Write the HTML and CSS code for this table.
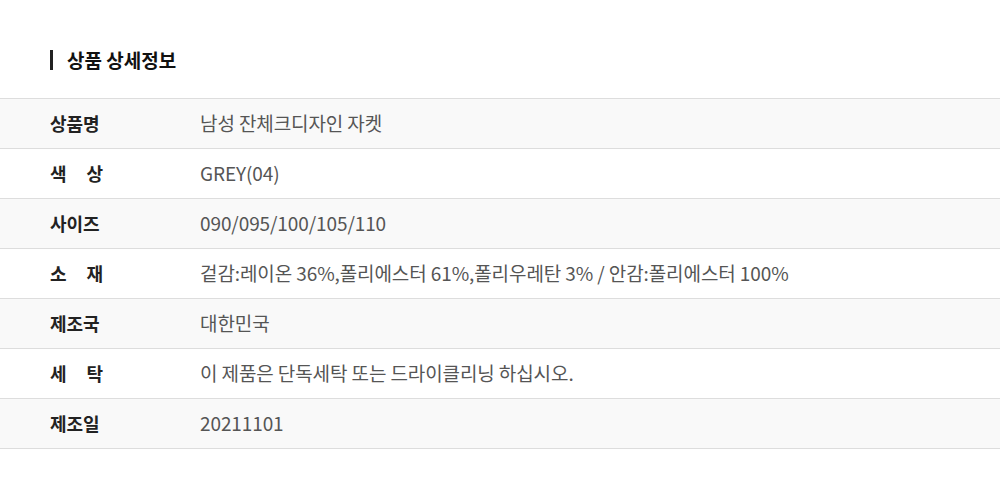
FILE: index.html
```html
<!DOCTYPE html>
<html>
  <head>
    <title>상품 상세정보</title>
    <meta name="viewport" content="width=device-width, initial-scale=1" />
    <link rel="stylesheet" href="styles.css">
  </head>
  <body>
    <div class="detail">
      <h3 class="detail-title">상품 상세정보</h3>
      <table class="info-table">
        <tr>
          <th><span class="label">상품명</span></th>
          <td>남성 잔체크디자인 자켓</td>
        </tr>
        <tr>
          <th><span class="label">색 상</span></th>
          <td>GREY(04)</td>
        </tr>
        <tr>
          <th><span class="label">사이즈</span></th>
          <td>090/095/100/105/110</td>
        </tr>
        <tr>
          <th><span class="label">소 재</span></th>
          <td>겉감:레이온 36%,폴리에스터 61%,폴리우레탄 3% / 안감:폴리에스터 100%</td>
        </tr>
        <tr>
          <th><span class="label">제조국</span></th>
          <td>대한민국</td>
        </tr>
        <tr>
          <th><span class="label">세 탁</span></th>
          <td>이 제품은 단독세탁 또는 드라이클리닝 하십시오.</td>
        </tr>
        <tr>
          <th><span class="label">제조일</span></th>
          <td>20211101</td>
        </tr>
      </table>
    </div>
  </body>
</html>
```

FILE: styles.css
```css
* {
  box-sizing: border-box;
}

body {
  margin: 0;
  background: #fff;
  font-family: "Noto Sans CJK KR", "Noto Sans", sans-serif;
  color: #222;
}

.detail {
  padding-top: 50px;
}

.detail-title {
  margin: 0 0 28px 50px;
  padding-left: 14px;
  border-left: 3px solid #222;
  font-size: 19px;
  font-weight: 700;
  line-height: 20px;
  height: 20px;
  color: #111;
}

.info-table {
  width: 100%;
  border-collapse: collapse;
  border-top: 1px solid #ddd;
}

.info-table tr {
  height: 50px;
  border-bottom: 1px solid #ddd;
}

.info-table tr:nth-child(odd) {
  background: #f9f9f9;
}

.info-table th {
  width: 200px;
  padding: 0 0 2px 50px;
  text-align: left;
  font-size: 18px;
  font-weight: 700;
  color: #222;
}

.label {
  display: inline-block;
  width: 53px;
  text-align: justify;
  text-align-last: justify;
}

.info-table td {
  padding: 0 0 2px;
  font-size: 19px;
  font-weight: 400;
  color: #555;
  letter-spacing: -0.1px;
}
```
